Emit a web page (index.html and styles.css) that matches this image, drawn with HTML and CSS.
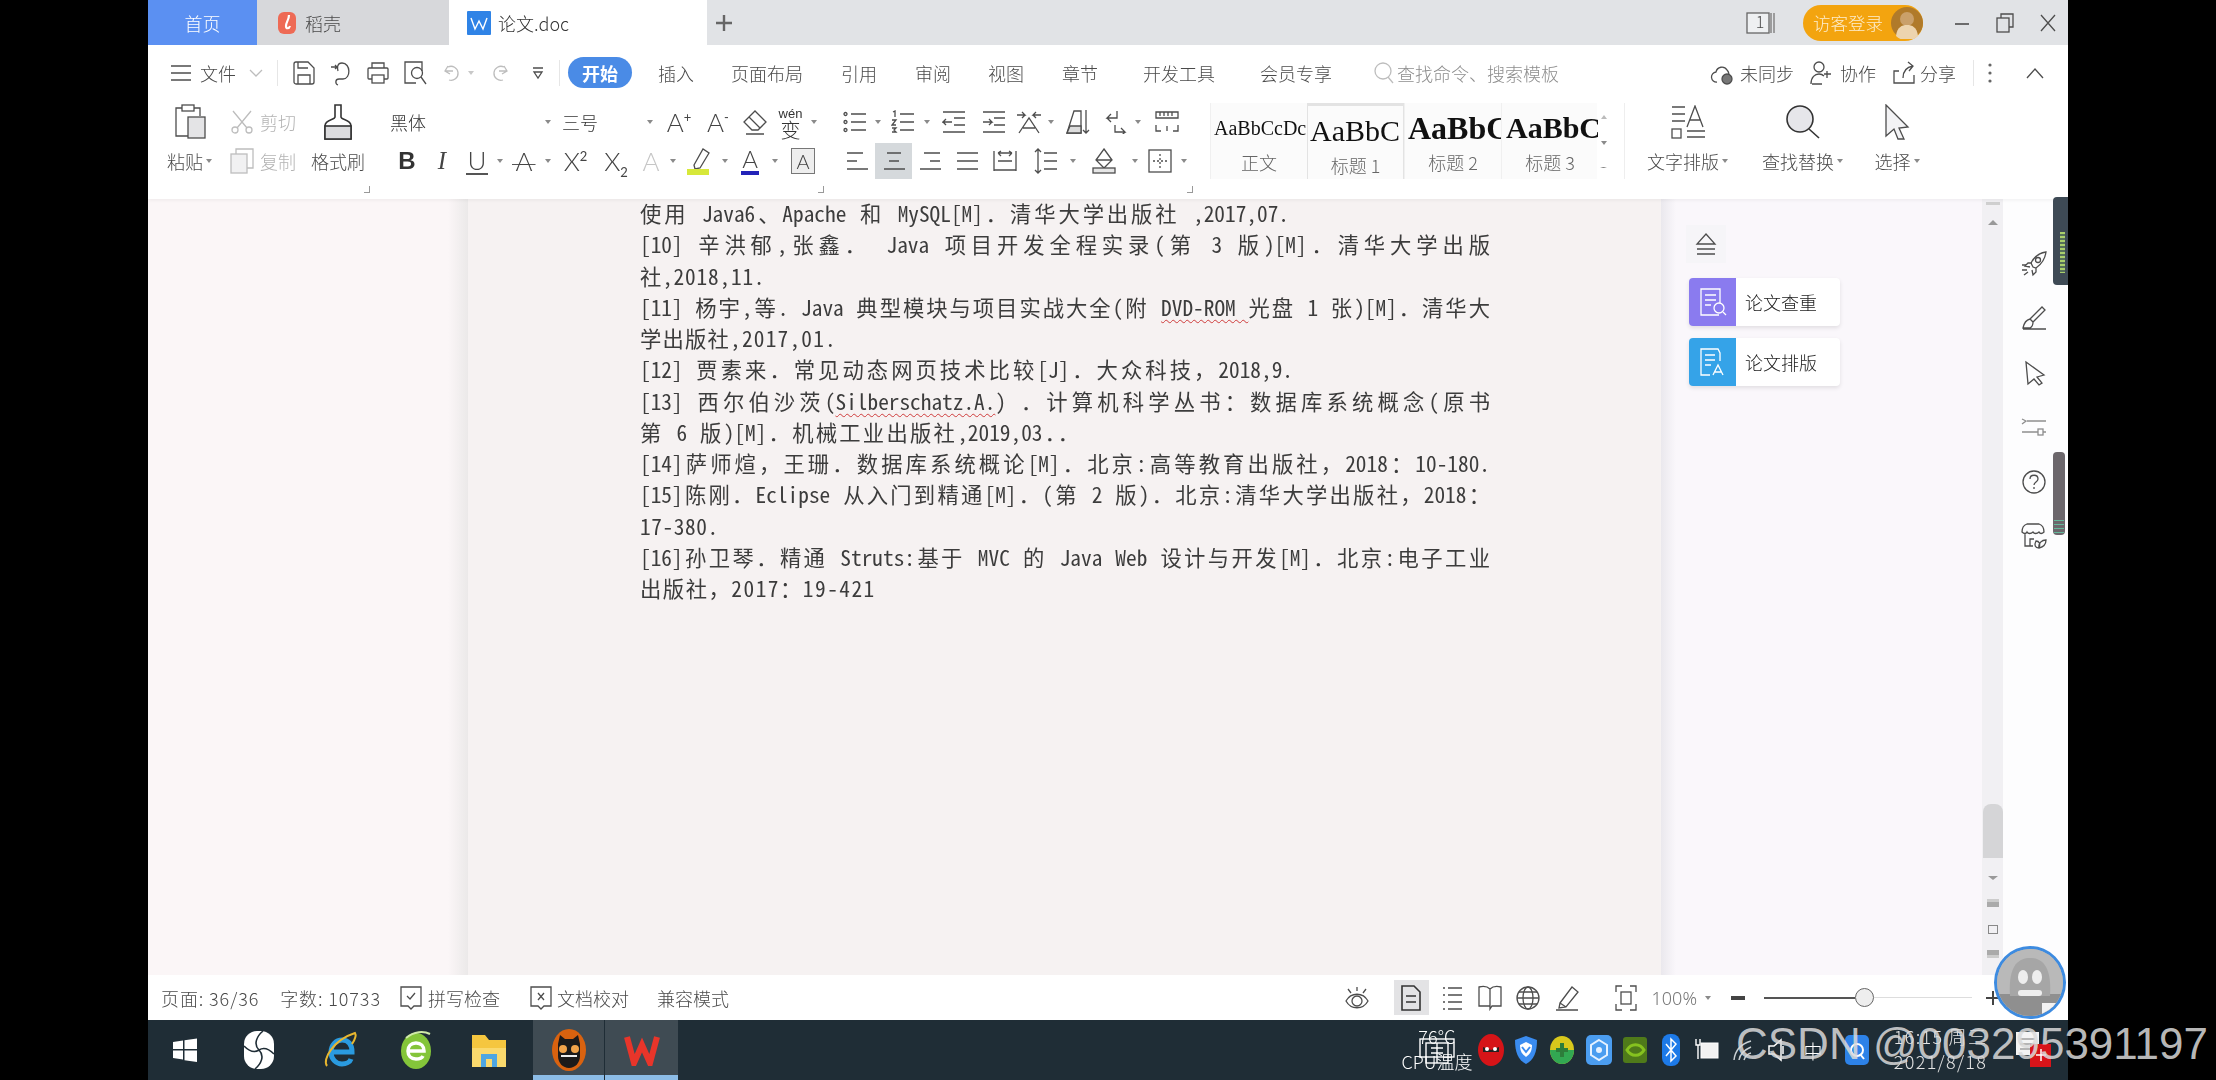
FILE: index.html
```html
<!DOCTYPE html>
<html lang="zh">
<head>
<meta charset="utf-8">
<title>论文.doc</title>
<link rel="stylesheet" href="styles.css">
</head>
<body>
<div class="app">

  <header class="tabs">
    <div class="tab tab-home">首页</div>
    <div class="tab tab-dk">
      <svg width="20" height="24" viewBox="0 0 20 24"><rect x="1" y="1" width="18" height="22" rx="6" fill="#ee6a55"/><path d="M12 4c0 5-3 7-3 11 0 3 3 3 4 0" fill="none" stroke="#fff" stroke-width="2.2"/></svg>
      <span>稻壳</span>
    </div>
    <div class="tab tab-doc">
      <svg width="24" height="24" viewBox="0 0 24 24"><rect width="24" height="24" rx="1" fill="#2f83e6"/><path d="M4 7l4 11 4-8 4 8 4-11" fill="none" stroke="#fff" stroke-width="1.4"/></svg>
      <span>论文.doc</span>
    </div>
    <svg class="tab-plus" width="18" height="18" viewBox="0 0 18 18"><path d="M9 1v16M1 9h16" stroke="#666" stroke-width="2.4"/></svg>
    <div class="win">
      <svg class="ic w-box" width="30" height="24" viewBox="0 0 30 24"><rect x="1" y="2" width="22" height="20" fill="#eef0f2" stroke="#666"/><path d="M25 2v20M28 2v20" stroke="#777"/></svg>
      <span class="w-num">1</span>
      <div class="login"><span>访客登录</span>
        <svg width="32" height="32" viewBox="0 0 32 32"><circle cx="16" cy="16" r="16" fill="#b07a2a"/><circle cx="16" cy="12" r="7" fill="#caa06a"/><path d="M5 29c1-9 6-11 11-11s10 2 11 11a16 16 0 0 1-22 0z" fill="#edd4ae"/></svg>
      </div>
      <svg class="ic w-min" width="16" height="16" viewBox="0 0 16 16"><path d="M1 9h14" stroke-width="1.6"/></svg>
      <svg class="ic w-res" width="18" height="20" viewBox="0 0 18 20"><rect x="1" y="5" width="12" height="14"/><path d="M5 5V1h12v13h-4"/></svg>
      <svg class="ic w-cls" width="16" height="18" viewBox="0 0 16 18"><path d="M1 1l14 16M15 1L1 17"/></svg>
    </div>
  </header>

  <nav class="menu">
    <svg class="ic" width="22" height="18" viewBox="0 0 22 18"><path d="M1 2h20M1 9h20M1 16h20"/></svg>
    <span>文件</span>
    <svg class="ic lite" width="14" height="10" viewBox="0 0 14 10"><path d="M1 2l6 6 6-6"/></svg>
    <i class="sep"></i>
    <svg class="ic" width="22" height="24" viewBox="0 0 22 24"><path d="M3 1h12l6 6v14a2 2 0 0 1-2 2H3a2 2 0 0 1-2-2V3a2 2 0 0 1 2-2z"/><path d="M5 23v-9h12v9M5 1v6h10"/></svg>
    <svg class="ic" width="22" height="26" viewBox="0 0 22 26"><path d="M1 7h6l-2-2m2 2l-2 2M8 25c-3-1-3-6 1-6h4c8 0 8-16-1-16-5 0-5 5-4 8"/></svg>
    <svg class="ic" width="22" height="24" viewBox="0 0 22 24"><path d="M5 7V2h12v5M5 18H2a1 1 0 0 1-1-1V8a1 1 0 0 1 1-1h18a1 1 0 0 1 1 1v9a1 1 0 0 1-1 1h-3"/><rect x="5" y="14" width="12" height="8"/></svg>
    <svg class="ic" width="24" height="26" viewBox="0 0 24 26"><path d="M13 23H2V2h17v9"/><circle cx="14" cy="13" r="5.5"/><path d="M18 17l5 7"/></svg>
    <svg class="ic lite" width="18" height="20" viewBox="0 0 18 20"><path d="M1 8h8M4 3L1 8l5 3M4 4a7 7 0 1 1 1 13"/></svg>
    <i class="caret lt"></i>
    <svg class="ic lite" width="18" height="20" viewBox="0 0 18 20"><path d="M17 8H9M14 3l3 5-5 3M14 4a7 7 0 1 0-1 13"/></svg>
    <svg class="ic" width="12" height="14" viewBox="0 0 12 14"><path d="M1 2h10M2 6h8L6 12z"/></svg>
    <i class="sep"></i>
    <b class="pill">开始</b>
    <span>插入</span><span>页面布局</span><span>引用</span><span>审阅</span><span>视图</span><span>章节</span><span>开发工具</span><span>会员专享</span>
    <svg class="ic lite" width="22" height="24" viewBox="0 0 22 24"><circle cx="10" cy="10" r="8"/><path d="M15 16l5 6"/></svg>
    <span class="muted">查找命令、搜索模板</span>
    <svg class="ic" width="24" height="24" viewBox="0 0 24 24"><path d="M7 21a5 5 0 0 1-1-10 6 6 0 0 1 11-2 6 6 0 0 1 1 7"/><circle cx="17" cy="18" r="5" fill="#777"/></svg>
    <span>未同步</span>
    <svg class="ic" width="22" height="24" viewBox="0 0 22 24"><circle cx="9" cy="6" r="5"/><path d="M1 23c0-7 4-10 8-10 2 0 4 1 5 2M2 23h10M17 10v7M14 13h7"/></svg>
    <span>协作</span>
    <svg class="ic" width="22" height="24" viewBox="0 0 22 24"><path d="M6 10H1v12h20v-8M10 17c0-7 4-11 10-12M15 1l5 4-4 5"/></svg>
    <span>分享</span>
    <i class="sep"></i>
    <svg class="ic-dots" width="4" height="22" viewBox="0 0 4 22"><circle cx="2" cy="3" r="1.6"/><circle cx="2" cy="11" r="1.6"/><circle cx="2" cy="19" r="1.6"/></svg>
    <svg class="ic" width="18" height="12" viewBox="0 0 18 12"><path d="M1 11l8-9 8 9"/></svg>
  </nav>

  <section class="ribbon">
    <div class="big b-paste">
      <div class="big-ic"><svg class="ic" width="32" height="36" viewBox="0 0 32 36"><path d="M14 32H2V4h6M20 4h6v8"/><rect x="8" y="1" width="12" height="6"/><rect x="14" y="13" width="17" height="21" fill="#e4e4e6"/></svg></div>
      <div class="big-lb">粘贴<i class="caret"></i></div>
    </div>
    <div class="small-col">
      <div class="small-row"><svg class="ic lite" width="24" height="24" viewBox="0 0 24 24"><path d="M3 1l14 17M21 1L7 18"/><circle cx="5" cy="20" r="3"/><circle cx="19" cy="20" r="3"/></svg><span class="gray">剪切</span></div>
      <div class="small-row"><svg class="ic lite" width="24" height="26" viewBox="0 0 24 26"><path d="M6 6V1h17v19h-6"/><rect x="1" y="6" width="16" height="19" fill="#f1f1f2"/></svg><span class="gray">复制</span></div>
    </div>
    <div class="big b-brush">
      <div class="big-ic"><svg class="ic dark" width="28" height="36" viewBox="0 0 28 36"><path d="M11 1h6v12c0 3 10 2 10 9v13H1V22c0-7 10-6 10-9z"/><rect x="1" y="22" width="26" height="13" fill="#dcdcde"/></svg></div>
      <div class="big-lb">格式刷</div>
      <i class="corner"></i>
    </div>

    <div class="font-g">
      <div class="fr1">
        <div class="combo"><span>黑体</span><i class="caret"></i></div>
        <div class="combo"><span>三号</span><i class="caret"></i></div>
        <div class="c"><span class="t">A<sup>+</sup></span></div>
        <div class="c"><span class="t">A<sup>-</sup></span></div>
        <div class="c"><svg class="ic" width="26" height="26" viewBox="0 0 26 26"><path d="M2 13L13 2l11 11-8 8H10z"/><path d="M7 8l11 11M4 25h18"/></svg></div>
        <div class="c"><span class="wen"><small>wén</small>变</span></div>
        <div class="c"><i class="caret"></i></div>
      </div>
      <div class="fr2">
        <div class="c"><b class="t-b">B</b></div>
        <div class="c"><em class="t-i">I</em></div>
        <div class="c"><span class="t t-u">U</span></div>
        <div class="c"><i class="caret"></i></div>
        <div class="c"><span class="t t-s">A</span></div>
        <div class="c"><i class="caret"></i></div>
        <div class="c"><span class="t">X<sup>2</sup></span></div>
        <div class="c"><span class="t">X<sub>2</sub></span></div>
        <div class="c"><span class="t t-gray">A</span></div>
        <div class="c"><i class="caret"></i></div>
        <div class="c"><svg class="ic" width="24" height="28" viewBox="0 0 24 28"><path d="M7 18L16 2l6 4-9 15-5 1z"/><rect y="22" width="22" height="6" fill="#d7e83a" stroke="none"/></svg></div>
        <div class="c"><i class="caret"></i></div>
        <div class="c"><span class="t t-bl">A</span></div>
        <div class="c"><i class="caret"></i></div>
        <div class="c"><span class="t t-bx">A</span></div>
      </div>
      <i class="corner"></i>
    </div>

    <div class="para-g">
      <div class="pr1">
        <div class="c"><svg class="ic" width="24" height="24" viewBox="0 0 24 24"><path d="M8 4h15M8 12h15M8 20h15"/><circle cx="2.5" cy="4" r="1.5"/><circle cx="2.5" cy="12" r="1.5"/><circle cx="2.5" cy="20" r="1.5"/></svg></div>
        <div class="c"><i class="caret"></i></div>
        <div class="c"><svg class="ic" width="24" height="24" viewBox="0 0 24 24"><path d="M9 4h14M9 12h14M9 20h14M2 2l2-1v6M1 10h4l-4 5h4M1 18h4l-2 2 2 2H1"/></svg></div>
        <div class="c"><i class="caret"></i></div>
        <div class="c"><svg class="ic" width="24" height="24" viewBox="0 0 24 24"><path d="M1 2h22M12 8h11M12 15h11M1 22h22M10 12H1l3-3m-3 3l3 3"/></svg></div>
        <div class="c"><svg class="ic" width="24" height="24" viewBox="0 0 24 24"><path d="M1 2h22M12 8h11M12 15h11M1 22h22M1 12h9l-3-3m3 3l-3 3"/></svg></div>
        <div class="c"><svg class="ic" width="26" height="24" viewBox="0 0 26 24"><path d="M3 23L13 8l10 15M7 18h12M1 5h8L6 2m3 3L6 8M25 5h-8l3-3m-3 3l3 3"/></svg></div>
        <div class="c"><i class="caret"></i></div>
        <div class="c"><svg class="ic" width="24" height="26" viewBox="0 0 24 26"><path d="M1 24L8 2h7v22H1z"/><path d="M4 17h11v7H1z" fill="#ddd"/><path d="M20 1v23M17 21l3 3 3-3"/></svg></div>
        <div class="c"><svg class="ic" width="22" height="24" viewBox="0 0 22 24"><path d="M12 1v7H2l4-4M2 8l4 4M10 15v7h10l-4-4m4 4l-4 4"/></svg></div>
        <div class="c"><i class="caret"></i></div>
        <div class="c"><svg class="ic" width="24" height="22" viewBox="0 0 24 22"><path d="M1 1h22v6H1zM5 1v4M9 1v4M13 1v4M17 1v4M1 14v6h5M23 14v6h-5M12 15v5"/></svg></div>
      </div>
      <div class="pr2">
        <div class="c"><svg class="ic" width="22" height="22" viewBox="0 0 22 22"><path d="M1 3h16M1 11h10M1 19h21"/></svg></div>
        <div class="c on"><svg class="ic" width="22" height="22" viewBox="0 0 22 22"><path d="M4 3h14M6 11h10M1 19h21"/></svg></div>
        <div class="c"><svg class="ic" width="22" height="22" viewBox="0 0 22 22"><path d="M5 3h16M11 11h10M1 19h21"/></svg></div>
        <div class="c"><svg class="ic" width="22" height="22" viewBox="0 0 22 22"><path d="M1 3h21M1 11h21M1 19h21"/></svg></div>
        <div class="c"><svg class="ic" width="24" height="24" viewBox="0 0 24 24"><path d="M1 2v20M23 2v20M5 4h14M5 4l3-2M5 4l3 3M19 4l-3-2M19 4l-3 3M5 12h14M1 21h22"/></svg></div>
        <div class="c"><svg class="ic" width="24" height="28" viewBox="0 0 24 28"><path d="M4 2v24M1 5l3-3 3 3M1 23l3 3 3-3M10 6h13M10 14h13M10 22h13"/></svg></div>
        <div class="c"><i class="caret"></i></div>
        <div class="c"><svg class="ic" width="24" height="26" viewBox="0 0 24 26"><path d="M12 1l8 11-8 8-8-8zM4 12h16"/><rect x="1" y="20" width="22" height="5" fill="#e6e6e6"/></svg></div>
        <div class="c"><i class="caret"></i></div>
        <div class="c"><svg class="ic" width="24" height="26" viewBox="0 0 24 26"><rect x="1" y="2" width="22" height="22"/><path d="M12 6v14M5 13h14" stroke-dasharray="2 2"/></svg></div>
        <div class="c"><i class="caret"></i></div>
      </div>
      <i class="corner"></i>
    </div>

    <div class="gallery">
      <div class="sty"><div class="pv p0">AaBbCcDc</div><div class="sl">正文</div></div>
      <div class="sty sty-on"><div class="pv p1">AaBbC</div><div class="sl">标题 1</div></div>
      <div class="sty"><div class="pv p2">AaBbC</div><div class="sl">标题 2</div></div>
      <div class="sty"><div class="pv p3">AaBbC</div><div class="sl">标题 3</div></div>
    </div>
    <div class="gal-sc"><i class="tri-up"></i><i class="caret"></i><i class="tri-more"></i></div>

    <div class="big b-txt">
      <div class="big-ic"><svg class="ic" width="36" height="34" viewBox="0 0 36 34"><path d="M2 2h13M2 9h13M2 16h13M17 22L25 1l8 21M20 15h11M17 26h18M17 32h18"/><rect x="2" y="24" width="9" height="9"/></svg></div>
      <div class="big-lb">文字排版<i class="caret"></i></div>
    </div>
    <div class="big b-find">
      <div class="big-ic"><svg class="ic dark" width="34" height="34" viewBox="0 0 34 34"><circle cx="14" cy="14" r="13" fill="#e6e6ea"/><path d="M23 24l10 9"/></svg></div>
      <div class="big-lb">查找替换<i class="caret"></i></div>
    </div>
    <div class="big b-sel">
      <div class="big-ic"><svg class="ic" width="26" height="36" viewBox="0 0 26 36"><path d="M2 1l22 22-9 1 5 11-6 0-4-10-8 7z" fill="#f3f3f5"/></svg></div>
      <div class="big-lb">选择<i class="caret"></i></div>
    </div>
  </section>

  <main class="doc">
    <div class="gutter"></div>
    <article class="page">
      <p class="ln w649">使用 Java6、Apache 和 MySQL[M]．清华大学出版社 ,2017,07.</p>
      <p class="ln">[10] 辛洪郁,张鑫． Java 项目开发全程实录(第 3 版)[M]．清华大学出版</p>
      <p class="ln w125">社,2018,11.</p>
      <p class="ln">[11] 杨宇,等. Java 典型模块与项目实战大全(附 <span class="wavy">DVD-ROM </span>光盘 1 张)[M]．清华大</p>
      <p class="ln w197">学出版社,2017,01.</p>
      <p class="ln w653">[12] 贾素来．常见动态网页技术比较[J]．大众科技，2018,9.</p>
      <p class="ln">[13] 西尔伯沙茨(<span class="wavy">Silberschatz.A.</span>) ．计算机科学丛书：数据库系统概念(原书</p>
      <p class="ln w439">第 6 版)[M]．机械工业出版社,2019,03．．</p>
      <p class="ln">[14]萨师煊，王珊．数据库系统概论[M]．北京:高等教育出版社，2018：10-180.</p>
      <p class="ln">[15]陈刚．Eclipse 从入门到精通[M]．(第 2 版)．北京:清华大学出版社，2018：</p>
      <p class="ln w79">17-380.</p>
      <p class="ln">[16]孙卫琴．精通 Struts:基于 MVC 的 Java Web 设计与开发[M]．北京:电子工业</p>
      <p class="ln w237">出版社，2017：19-421</p>
    </article>
    <aside class="panel">
      <div class="eject"><svg class="ic" width="26" height="22" viewBox="0 0 26 22"><path d="M13 1l9 10H4zM4 16h18M4 21h18"/></svg></div>
      <div class="card"><span class="card-ic purple"><svg width="28" height="30" viewBox="0 0 28 30" fill="none" stroke="#fff" stroke-width="1.3"><path d="M20 28H2V2h19v14M6 8h11M6 13h11M6 18h6"/><circle cx="20" cy="21" r="5"/><path d="M24 25l3 3"/></svg></span><span class="card-t">论文查重</span></div>
      <div class="card"><span class="card-ic blue"><svg width="28" height="30" viewBox="0 0 28 30" fill="none" stroke="#fff" stroke-width="1.3"><path d="M11 28H2V2h17l2 4v8M6 8h10M6 13h10M6 18h6M14 28l5-10 5 10M16 25h6"/></svg></span><span class="card-t">论文排版</span></div>
    </aside>
    <div class="scroll">
      <i class="sc-top"></i>
      <i class="sc-up"></i>
      <i class="sc-thumb"></i>
      <i class="sc-dn"></i>
      <i class="sc-dbl-up"></i>
      <i class="sc-mid"></i>
      <i class="sc-dbl-dn"></i>
    </div>
    <div class="tools">
      <svg class="ic" width="26" height="26" viewBox="0 0 26 26"><path d="M10 12c3-6 8-10 15-11-1 7-4 12-10 16l-3-1zM11 12H7l-3 3 5 1M15 17v4l-3 3-1-5"/><circle cx="17" cy="9" r="2.5"/><path d="M1 14h4M1 19h5M3 24l4-3"/></svg>
      <svg class="ic" width="26" height="26" viewBox="0 0 26 26"><path d="M9 14L21 2l3 3-12 12zM9 14c-4 1-6 4-7 9h7c2-1 3-3 3-6M2 24h23"/></svg>
      <svg class="ic" width="26" height="26" viewBox="0 0 26 26"><path d="M5 2l18 13-7 2 5 6-3 2-5-6-6 5z"/></svg>
      <svg class="ic lite2" width="26" height="26" viewBox="0 0 26 26"><path d="M6 7h19M1 18h16M22 18h3M1 5l4 2-4 3"/><rect x="17" y="15" width="5" height="6"/></svg>
      <svg class="ic" width="26" height="26" viewBox="0 0 26 26"><circle cx="13" cy="13" r="11"/><path d="M9 10c0-5 8-5 8 0 0 3-4 3-4 6M13 18v2"/></svg>
      <svg class="ic" width="26" height="26" viewBox="0 0 26 26"><path d="M1 9c0-4 2-7 5-8h12c3 1 5 4 5 8-2 2-4 2-5 0-2 2-5 2-6 0-2 2-5 2-6 0-1 2-3 2-5 0zM4 11v12h8M9 23v-7h4"/><path d="M18 25c-4 0-5-3-3-7 3 0 5 3 3 7zM18 25c4-1 7-4 7-8-4 0-8 3-7 8z"/></svg>
    </div>
  </main>

  <footer class="status">
    <span class="s1">页面: 36/36</span>
    <span class="s2">字数: 10733</span>
    <svg class="ic s3" width="22" height="24" viewBox="0 0 22 24"><path d="M1 1h20v19h-7l-3 3-3-3H1z"/><path d="M7 10l3 3 5-6"/></svg>
    <span class="s4">拼写检查</span>
    <svg class="ic s5" width="22" height="24" viewBox="0 0 22 24"><path d="M1 1h20v19h-7l-3 3-3-3H1z"/><path d="M8 7l6 7M14 7l-6 7"/></svg>
    <span class="s6">文档校对</span>
    <span class="s7">兼容模式</span>
    <div class="view">
      <svg class="ic" width="24" height="26" viewBox="0 0 24 26"><path d="M1 16c5-9 17-9 22 0-5 9-17 9-22 0z"/><circle cx="12" cy="16" r="5"/><path d="M12 2v4M3 4l3 4M21 4l-3 4"/></svg>
      <div class="vw-on"><svg class="ic dark" width="20" height="26" viewBox="0 0 20 26"><path d="M1 1h12l6 6v18H1zM5 11h10M5 17h10"/></svg></div>
      <svg class="ic" width="20" height="26" viewBox="0 0 20 26"><path d="M6 3h14M6 10h14M6 17h14M6 24h14M1 3h2M1 10h2M1 17h2M1 24h2"/></svg>
      <svg class="ic" width="24" height="26" viewBox="0 0 24 26"><path d="M12 4C9 1 5 1 1 2v19h11v3l2-3h9V2c-4-1-8-1-11 2zM12 4v17"/></svg>
      <svg class="ic" width="24" height="26" viewBox="0 0 24 26"><circle cx="12" cy="13" r="11"/><ellipse cx="12" cy="13" rx="5" ry="11"/><path d="M1 13h22M3 7h18M3 19h18"/></svg>
      <svg class="ic" width="26" height="26" viewBox="0 0 26 26"><path d="M5 18L17 2l6 5-12 15-7 1zM1 25h22M5 18l6 4"/></svg>
      <svg class="ic" width="22" height="26" viewBox="0 0 22 26"><path d="M1 7V1h6M15 1h6v6M21 19v6h-6M7 25H1v-6"/><rect x="6" y="7" width="10" height="12"/></svg>
      <span class="v-pct">100%</span><i class="caret"></i>
      <svg class="v-minus" width="14" height="4" viewBox="0 0 14 4"><rect width="14" height="4" fill="#444"/></svg>
      <div class="slider"><i class="sl-fill"></i><i class="sl-knob"></i><i class="sl-rest"></i></div>
      <svg class="v-plus" width="14" height="14" viewBox="0 0 14 14"><path d="M0 7h14M7 0v14" stroke="#444" stroke-width="2"/></svg>
    </div>
  </footer>

  <div class="taskbar">
    <div class="tk"><svg width="26" height="26" viewBox="0 0 26 26" fill="#fff"><path d="M1 5l10-1.5V12H1zM12.5 3.300L25 1.500V12H12.500zM1 13.500h10v9L1 21zM12.500 13.500H25V25l-12.500-1.800z"/></svg></div>
    <div class="tk"><svg width="32" height="40" viewBox="0 0 32 40"><rect x="1" y="1" width="30" height="38" rx="13" fill="#fff"/><path d="M16 20C10 14 14 6 20 1M16 20c6 6 2 14-4 19M16 20C10 24 5 20 1 16M16 20c6-4 11 0 15 4" stroke="#1f2d36" stroke-width="1.600" fill="none"/></svg></div>
    <div class="tk"><svg width="36" height="40" viewBox="0 0 36 40" fill="none"><path d="M7 22h22c0-8-4-12-10-12S8 15 8 22s5 12 11 12c4 0 8-2 9-5" stroke="#2a9be0" stroke-width="5"/><path d="M4 36C-1 30 10 10 32 3c2 3-1 8-3 11" stroke="#e8b62f" stroke-width="2"/></svg></div>
    <div class="tk"><svg width="32" height="40" viewBox="0 0 32 40"><ellipse cx="16" cy="21" rx="15" ry="18" fill="#84c53a"/><path d="M8 21h16c0-5-3-8-8-8s-8 3-8 8 3 8 8 8c3 0 6-1 7-3" fill="none" stroke="#fff" stroke-width="3.500"/><path d="M6 8C14 1 24 1 30 4" fill="none" stroke="#cfe9a8" stroke-width="2"/></svg></div>
    <div class="tk"><svg width="34" height="36" viewBox="0 0 34 36"><path d="M0 3h13l4 5h17v27H0z" fill="#f5c63f"/><rect y="16" width="34" height="19" fill="#fad96d"/><path d="M9 35V22h16v13h-5v-8h-6v8z" fill="#4ea6e2"/></svg></div>
    <div class="tk tk-on"><svg width="36" height="44" viewBox="0 0 36 44"><ellipse cx="18" cy="22" rx="17" ry="21" fill="#d9620f"/><path d="M7 16l2-9 5 4h8l5-4 2 9v12c0 7-5 12-11 12S7 35 7 28z" fill="#1c1a1a"/><circle cx="12" cy="21" r="4" fill="#f2a34a"/><circle cx="24" cy="21" r="4" fill="#f2a34a"/><path d="M10 28h16" stroke="#eee" stroke-width="2"/></svg></div>
    <div class="tk tk-on"><svg width="36" height="32" viewBox="0 0 36 32" fill="none"><path d="M3 3l7 26 8-18 8 18 7-26" stroke="#e8352a" stroke-width="6"/></svg></div>
    <div class="tray">
      <div class="temp"><span>76℃</span><span>CPU温度</span>
        <svg class="temp-ic" width="36" height="26" viewBox="0 0 36 26" fill="none" stroke="#fff" stroke-width="1.400"><rect x="1" y="1" width="34" height="18"/><rect x="7" y="5" width="22" height="20"/><path d="M12 10h12M12 15h12M18 5v20"/></svg>
      </div>
      <div class="c"><svg width="26" height="34" viewBox="0 0 26 34"><ellipse cx="13" cy="17" rx="13" ry="16" fill="#d61418"/><path d="M5 14l8 3 8-3v5H5z" fill="#222"/><circle cx="9" cy="16" r="2" fill="#fff"/><circle cx="17" cy="16" r="2" fill="#fff"/></svg></div>
      <div class="c"><svg width="24" height="30" viewBox="0 0 24 30"><path d="M12 1l11 4c0 12-3 20-11 24C4 25 1 17 1 5z" fill="#3a8cf0"/><path d="M12 7l6 3c0 6-2 9-6 12-4-3-6-6-6-12z" fill="#fff"/><path d="M8 12l4 5 4-5" fill="none" stroke="#3a8cf0" stroke-width="2"/></svg></div>
      <div class="c"><svg width="24" height="30" viewBox="0 0 24 30"><ellipse cx="12" cy="15" rx="12" ry="14" fill="#d8c81c"/><path d="M0 15a12 14 0 0 0 24 0z" fill="#32a852"/><path d="M12 8v14M6 15h12" stroke="#2d7d3a" stroke-width="4"/></svg></div>
      <div class="c"><svg width="26" height="30" viewBox="0 0 26 30"><rect width="26" height="30" rx="5" fill="#4b9df0"/><path d="M13 5l8 5v10l-8 5-8-5V10z" fill="none" stroke="#e5f1ff" stroke-width="2"/><circle cx="13" cy="15" r="3" fill="#e5f1ff"/></svg></div>
      <div class="c"><svg width="24" height="26" viewBox="0 0 24 26"><rect width="24" height="26" rx="3" fill="#4f7a1a"/><path d="M4 13c4-7 13-7 17 0-4 7-13 7-17 0z" fill="none" stroke="#86c21f" stroke-width="3"/></svg></div>
      <div class="c"><svg width="18" height="32" viewBox="0 0 18 32"><rect width="18" height="32" rx="8" fill="#1d7ae8"/><path d="M4 10l10 12-5 5V5l5 5L4 22" fill="none" stroke="#fff" stroke-width="1.500"/></svg></div>
      <div class="c"><svg width="24" height="24" viewBox="0 0 24 24"><rect x="6" y="5" width="17" height="15" fill="#f2f2f2" stroke="#fff"/><path d="M1 1v6h4V1M3 7v14" fill="none" stroke="#fff" stroke-width="1.400"/></svg></div>
      <div class="c"><svg width="20" height="22" viewBox="0 0 20 22" fill="none" stroke="#c9d0d4" stroke-width="1.500"><path d="M1 21C2 12 8 5 18 2M6 21c1-6 5-10 12-13M11 21c1-3 3-6 7-7"/></svg></div>
      <div class="c"><svg width="18" height="24" viewBox="0 0 18 24" fill="none" stroke="#fff" stroke-width="1.500"><path d="M1 8h5l7-6v20l-7-6H1zM15 8v8"/></svg></div>
      <div class="c tray-ime">中</div>
      <div class="c"><svg width="24" height="30" viewBox="0 0 24 30"><rect width="24" height="30" rx="5" fill="#2d82e8"/><circle cx="12" cy="15" r="6" fill="none" stroke="#fff" stroke-width="2"/><path d="M15 19l4 5" stroke="#fff" stroke-width="2"/></svg></div>
      <div class="clock"><span>16:15 周三</span><span>2021/8/18</span></div>
      <div class="c"><svg width="36" height="36" viewBox="0 0 36 36"><path d="M0 0h23v23H0z" fill="#f4f4f4"/><path d="M4 7h15M4 12h15M4 17h10" stroke="#777"/><rect x="14" y="12" width="21" height="23" fill="#d8141a"/><path d="M25 17v12M20 23h10" stroke="#fff" stroke-width="1.500"/></svg></div>
    </div>
  </div>
</div>

<div class="ov-bar1"><i></i></div>
<div class="ov-bar2"><i></i></div>
<div class="bubble"><svg width="68" height="68" viewBox="0 0 68 68"><rect width="68" height="68" fill="#b9b9b9"/><path d="M0 46h68v22H0z" fill="#8f8f8f"/><path d="M14 48C12 18 22 10 34 10s22 8 20 38z" fill="#a6a6a6"/><ellipse cx="27" cy="29" rx="5" ry="7" fill="#eee"/><ellipse cx="41" cy="29" rx="5" ry="7" fill="#eee"/><rect x="22" y="42" width="24" height="6" rx="3" fill="#eee"/><rect x="46" y="55" width="18" height="13" fill="#f2f2f2"/></svg></div>
<div class="watermark">CSDN @003295391197</div>
</body>
</html>
```
FILE: styles.css
```css
* { box-sizing: border-box; }
html, body { margin: 0; padding: 0; }
body {
  width: 2216px;
  height: 1080px;
  background: #000;
  overflow: hidden;
  position: relative;
  font-family: "Noto Sans CJK SC", "Liberation Sans", sans-serif;
  font-size: 18px;
  font-weight: 300;
  color: #4a4a4a;
}
i { display: block; font-style: normal; }
.app { width: 1920px; height: 1080px; margin-left: 148px; display: flex; flex-direction: column; background: #fff; filter: blur(.4px); }

.ic { fill: none; stroke: #4d4d4d; stroke-width: 1.3; display: block; }
.ic.lite { stroke: #bdbdbd; }
.ic.lite2 { stroke: #8e8e8e; }
.ic.dark { stroke: #333; stroke-width: 1.6; }
.ic-dots { fill: #666; }
.caret { width: 0; height: 0; border-left: 3px solid transparent; border-right: 3px solid transparent; border-top: 4px solid #8a8a8a; }
.caret.lt { border-top-color: #c8c8c8; }
.c { display: flex; align-items: center; justify-content: center; min-width: 0; }
.sep { width: 1px; height: 26px; background: #e6e6e6; }
.muted { color: #8d8d8d; white-space: nowrap; }
.gray { color: #b4b4b4; }

/* Title bar */
.tabs { height: 45px; background: #e1e3e6; display: flex; align-items: stretch; }
.tab { display: flex; align-items: center; }
.tab-home { width: 109px; background: #5b90f2; color: #fff; justify-content: center; }
.tab-dk { width: 192px; background: #d7d8db; padding-left: 20px; gap: 8px; }
.tab-doc { width: 258px; background: #fff; padding-left: 18px; gap: 7px; color: #333; }
.tab-plus { align-self: center; margin-left: 8px; }
.win { margin-left: auto; display: flex; align-items: center; position: relative; }
.w-box { margin-right: 27px; }
.w-num { position: absolute; left: 6px; top: 10px; font-size: 16px; line-height: 22px; width: 16px; text-align: center; }
.login { width: 120px; height: 36px; border-radius: 18px; background: #f3a40f; color: #fdeed0; display: flex; align-items: center; justify-content: space-between; padding-left: 10px; margin-right: 31px; font-size: 17.5px; white-space: nowrap; }
.w-min { margin-right: 26px; }
.w-res { margin-right: 26px; }
.w-cls { margin-right: 12px; }

/* Menu row */
.menu {
  height: 55px;
  display: grid;
  grid-template-columns: 30px 49px 28px 16px 37px 37px 36px 41px 24px 22px 42px 27px 9px 90px 73px 110px 74px 73px 74px 81px 117px 113px 24px 313px 30px 70px 30px 53px 27px 53px 15px 38px 42px;
  align-items: center;
  padding-left: 22px;
  white-space: nowrap;
}
.pill { width: 64px; height: 31px; border-radius: 16px; background: #4a8be6; color: #fff; font-weight: 700; display: flex; align-items: center; justify-content: center; }

/* Ribbon */
.ribbon { height: 99px; padding-top: 3px; display: flex; white-space: nowrap; box-shadow: 0 2px 3px rgba(0,0,0,.04); position: relative; z-index: 1; background: #fff; }
.big { display: grid; grid-template-rows: 38px 36px; row-gap: 2px; justify-items: center; align-items: center; position: relative; align-content: start; }
.big-ic { display: flex; align-items: center; justify-content: center; }
.big-lb { display: flex; align-items: center; gap: 3px; }
.b-paste { width: 68px; padding-left: 15px; }
.b-brush { width: 68px; margin-right: 12px; }
.b-brush .corner { right: 2px; }
.small-col { width: 88px; padding-left: 14px; display: grid; grid-template-rows: 38px 36px; row-gap: 2px; align-content: start; }
.small-row { display: flex; align-items: center; gap: 6px; }

.font-g { width: 454px; display: grid; grid-template-rows: 38px 36px; row-gap: 2px; position: relative; align-content: start; }
.fr1 { display: grid; grid-template-columns: 172px 102px 42px 36px 37px 35px 12px; }
.fr2 { display: grid; grid-template-columns: 34px 36px 34px 12px 36px 12px 43px 38px 32px 12px 40px 12px 38px 12px 44px; padding-left: 6px; }
.combo { display: flex; align-items: center; justify-content: space-between; padding: 0 5px 0 6px; color: #333; }
.corner { position: absolute; right: 14px; bottom: 6px; width: 6px; height: 7px; border-right: 1px solid #999; border-bottom: 1px solid #999; }

.t { font-family: "Lato", "Liberation Sans", sans-serif; font-weight: 300; font-size: 26px; line-height: 30px; color: #444; display: block; }
.t sup, .t sub { font-size: 13px; line-height: 0; font-weight: 400; }
.t-b { font-family: "Liberation Sans", sans-serif; font-size: 24px; line-height: 28px; font-weight: 700; color: #333; }
.t-i { font-family: "Liberation Serif", serif; font-size: 25px; line-height: 28px; color: #444; }
.t-u { border-bottom: 2px solid #555; line-height: 25px; padding: 0 2px; }
.t-s { position: relative; background: linear-gradient(#555, #555) center 62% / 100% 1px no-repeat; padding: 0 3px; }
.t-gray { color: #c6c6c6; }
.t-bl { border-bottom: 4px solid #2323b8; line-height: 24px; font-size: 24px; padding: 0 1px; }
.t-bx { border: 1px solid #777; background: #eee; font-size: 20px; line-height: 24px; padding: 0 4px; }
.wen { display: flex; flex-direction: column; align-items: center; font-size: 20px; line-height: 17px; color: #333; }
.wen small { font-size: 13px; line-height: 14px; font-family: "Liberation Sans", sans-serif; }

.para-g { width: 372px; padding-right: 20px; display: grid; grid-template-rows: 38px 36px; row-gap: 2px; position: relative; align-content: start; }
.pr1 { display: grid; grid-template-columns: 34px 12px 37px 12px 42px 37px 33px 12px 42px 33px 12px 46px; }
.pr2 { display: grid; grid-template-columns: 37px 37px 36px 37px 40px 42px 12px 50px 12px 37px 12px; }
.c.on { background: #d5d9dc; }
.para-g .corner { right: 17px; }

.gallery { width: 387px; display: grid; grid-template-columns: repeat(4, 97px); height: 76px; background: #fbfbfb; }
.sty { border-left: 1px solid #f0f0f0; overflow: hidden; }
.sty-on { border-top: 3px solid #e3e3e3; border-left-color: #e3e3e3; border-right: 1px solid #e3e3e3; }
.pv { height: 44px; display: flex; align-items: center; justify-content: center; font-family: "Liberation Serif", serif; color: #111; overflow: hidden; font-weight: 400; white-space: nowrap; padding-top: 6px; }
.p0 { font-size: 20px; justify-content: flex-start; padding-left: 3px; }
.p1 { font-size: 30px; justify-content: flex-start; padding-left: 2px; }
.p2 { font-size: 32px; font-weight: 700; justify-content: flex-start; padding-left: 3px; }
.p3 { font-size: 30px; font-weight: 700; justify-content: flex-start; padding-left: 4px; }
.sl { text-align: center; line-height: 30px; color: #666; }
.gal-sc { width: 28px; height: 76px; display: flex; flex-direction: column; align-items: center; padding: 12px 14px 6px 0; justify-content: space-between; border-right: 1px solid #eee; }
.tri-up { width: 0; height: 0; border-left: 3px solid transparent; border-right: 3px solid transparent; border-bottom: 4px solid #bbb; }
.tri-more { width: 7px; height: 6px; border-top: 1px solid #888; border-left: 3px solid transparent; border-right: 3px solid transparent; }
.b-txt { width: 95px; margin-left: 15px; }
.b-find { width: 115px; margin-left: 10px; }
.b-sel { width: 60px; margin-left: 7px; }

/* Document area */
.doc { height: 776px; display: flex; background: #fbf6f7; overflow: hidden; }
.gutter { width: 320px; background: linear-gradient(to right, #fbf6f7 300px, #ebe9e9 320px); }
.page { width: 1193px; background: #f6f2f2; padding-left: 172px; margin-top: -2px; font-family: "Noto Sans Mono CJK SC", "Noto Sans CJK SC", "Liberation Mono", monospace; font-size: 21.33px; color: #3c3c3c; font-weight: 400; }
.ln { margin: 0; width: 850px; height: 31.25px; line-height: 31.25px; text-align: justify; text-align-last: justify; }
.w649 { width: 649px; }
.w125 { width: auto; white-space: nowrap; text-align: left; text-align-last: left; letter-spacing: .8px; }
.w197 { width: auto; white-space: nowrap; text-align: left; text-align-last: left; letter-spacing: 1.2px; }
.w653 { width: 653px; }
.w439 { width: 439px; }
.w79 { width: auto; white-space: nowrap; text-align: left; text-align-last: left; letter-spacing: .6px; }
.w237 { width: auto; white-space: nowrap; text-align: left; text-align-last: left; letter-spacing: 1.5px; }
.wavy { text-decoration: underline wavy #cf3b3b 1px; text-underline-offset: 3px; text-decoration-skip-ink: none; }

.panel { width: 321px; background: linear-gradient(to right, #eae8ed, #faf7fb 15px); padding: 26px 0 0 28px; display: flex; flex-direction: column; align-items: flex-start; }
.eject { width: 40px; height: 38px; display: flex; align-items: center; justify-content: center; background: #f6f5f8; margin-left: -3px; margin-bottom: 15px; }
.card { width: 151px; height: 48px; display: flex; align-items: center; background: #fff; box-shadow: 0 2px 4px rgba(0,0,0,.1); border-radius: 4px; margin-bottom: 12px; white-space: nowrap; color: #222; }
.card-ic { width: 47px; height: 48px; border-radius: 4px 0 0 4px; display: flex; align-items: center; justify-content: center; }
.purple { background: #8a7bef; }
.blue { background: #35a3e8; }
.card-t { margin-left: 9px; }

.scroll { width: 21px; background: #f1f0f3; display: flex; flex-direction: column; align-items: center; padding-top: 3px; position: relative; }
.scroll i { flex: none; }
.sc-top { width: 14px; height: 3px; background: #cfcfcf; }
.sc-up { width: 0; height: 0; border-left: 5px solid transparent; border-right: 5px solid transparent; border-bottom: 5px solid #999; margin-top: 15px; }
.sc-thumb { width: 20px; height: 54px; background: #d5d5d7; border-radius: 8px 8px 0 0; margin-top: 579px; }
.sc-dn { width: 0; height: 0; border-left: 5px solid transparent; border-right: 5px solid transparent; border-top: 4px solid #999; margin-top: 18px; }
.sc-dbl-up { width: 12px; height: 8px; border-bottom: 5px solid #aaa; border-top: 3px solid #ccc; margin-top: 19px; }
.sc-mid { width: 10px; height: 9px; border: 1px solid #888; margin-top: 18px; }
.sc-dbl-dn { width: 12px; height: 8px; border-top: 5px solid #aaa; border-bottom: 3px solid #ccc; margin-top: 16px; }

.tools { width: 65px; background: #fdfdfe; display: flex; flex-direction: column; align-items: center; padding-top: 52px; padding-right: 4px; gap: 28.4px; }

/* Status bar */
.status { height: 45px; display: flex; align-items: center; white-space: nowrap; padding-left: 13px; background: #fff; }
.s1, .s2 { letter-spacing: .9px; }
.s2 { margin-left: 21px; }
.s3 { margin-left: 19px; }
.s4 { margin-left: 6px; }
.s5 { margin-left: 30px; }
.s6 { margin-left: 5px; }
.s7 { margin-left: 28px; }
.view { margin-left: auto; display: grid; grid-template-columns: 53px 56px 26px 50px 26px 54px 62px 40px 22px 38px 228px 16px; justify-items: center; align-items: center; padding-right: 67px; }
.vw-on { width: 35px; height: 35px; background: #e3e3e5; display: flex; align-items: center; justify-content: center; }
.v-pct { color: #777; font-family: "Noto Sans", sans-serif; justify-self: end; }
.slider { width: 208px; height: 20px; display: flex; align-items: center; justify-self: start; margin-left: 7px; }
.sl-fill { width: 91px; height: 2px; background: #555; }
.sl-knob { width: 19px; height: 19px; border-radius: 50%; border: 1px solid #666; background: #eee; flex: none; }
.sl-rest { flex: 1; height: 1px; background: #ddd; }

/* Task bar */
.taskbar { height: 60px; background: #1f2d36; display: grid; grid-template-columns: 74px 74px 90px 60px 86px 72px 74px 1fr; color: #fff; position: relative; }
.tk { display: flex; align-items: center; justify-content: center; position: relative; }
.tk-on { background: #3f4b53; border-bottom: 5px solid #8cbce6; padding-top: 5px; margin-left: 1px; }
.tray { display: grid; grid-template-columns: 72px 35px 36px 36px 37px 36px 35px 38px 34px 34px 38px 50px 117px 1fr; margin-left: 723px; white-space: nowrap; font-size: 18px; }
.tray-ime { font-size: 19px; }
.temp { display: flex; flex-direction: column; align-items: center; position: relative; line-height: 25px; padding-top: 4px; }
.temp-ic { position: absolute; left: 18px; top: 18px; }
.clock { display: flex; flex-direction: column; align-items: center; line-height: 25px; padding-top: 4px; letter-spacing: 1.3px; color: #e4e4e4; }

/* Floating things over the window */
.ov-bar1 { position: absolute; left: 2053px; top: 197px; width: 15px; height: 88px; background: #3e4a55; border-radius: 4px 0 0 4px; padding: 35px 3px 0 7px; }
.ov-bar1 i { height: 41px; background: repeating-linear-gradient(#a9cf6c 0 2px, #56705a 2px 4px); }
.ov-bar2 { position: absolute; left: 2053px; top: 452px; width: 12px; height: 83px; background: #6c676c; border-radius: 4px; padding: 68px 1px 0; }
.ov-bar2 i { height: 13px; background: repeating-linear-gradient(#64b89a 0 1px, #6c676c 1px 4px); }
.bubble { position: absolute; left: 1994px; top: 946px; width: 72px; height: 73px; border: 3px solid #3d8be0; border-radius: 50%; overflow: hidden; background: #b9b9b9; }
.bubble svg { display: block; margin: -1px; }
.watermark { position: absolute; left: 1736px; top: 1016px; font-family: "Liberation Sans", sans-serif; font-size: 44px; line-height: 56px; font-weight: 400; color: rgba(218,218,218,.85); white-space: nowrap; }
```
